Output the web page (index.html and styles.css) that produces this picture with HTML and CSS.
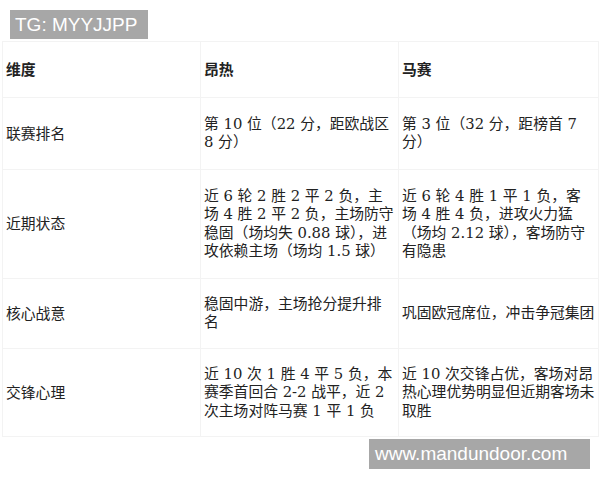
FILE: index.html
```html
<!DOCTYPE html>
<html lang="zh">
<head>
<meta charset="utf-8">
<link rel="stylesheet" href="styles.css">
</head>
<body>
<div class="page">
  <div class="top"><span class="badge">TG: MYYJJPP</span></div>
  <table class="cmp">
    <colgroup><col class="c1"><col class="c2"><col class="c3"></colgroup>
    <tr class="head">
      <th>维度</th><th>昂热</th><th>马赛</th>
    </tr>
    <tr>
      <td>联赛排名</td>
      <td>第 10 位（22 分，距欧战区 8 分）</td>
      <td>第 3 位（32 分，距榜首 7 分）</td>
    </tr>
    <tr>
      <td>近期状态</td>
      <td>近 6 轮 2 胜 2 平 2 负，主场 4 胜 2 平 2 负，主场防守稳固（场均失 0.88 球），进攻依赖主场（场均 1.5 球）</td>
      <td>近 6 轮 4 胜 1 平 1 负，客场 4 胜 4 负，进攻火力猛（场均 2.12 球），客场防守有隐患</td>
    </tr>
    <tr class="tight">
      <td>核心战意</td>
      <td>稳固中游，主场抢分提升排名</td>
      <td>巩固欧冠席位，冲击争冠集团</td>
    </tr>
    <tr class="tight">
      <td>交锋心理</td>
      <td>近 10 次 1 胜 4 平 5 负，本赛季首回合 2-2 战平，近 2 次主场对阵马赛 1 平 1 负</td>
      <td>近 10 次交锋占优，客场对昂热心理优势明显但近期客场未取胜</td>
    </tr>
  </table>
  <div class="bottom"><span class="badge wide">www.mandundoor.com</span></div>
</div>
</body>
</html>
```

FILE: styles.css
```css
html, body {
  margin: 0;
  padding: 0;
  background: #ffffff;
}
.page {
  width: 600px;
  height: 480px;
  padding-top: 10px;
  box-sizing: border-box;
  overflow: hidden;
}
.top {
  padding-left: 10px;
  height: 29px;
}
.badge {
  display: inline-block;
  height: 29px;
  line-height: 29px;
  background: #a7a7a7;
  color: #ffffff;
  font-family: "Liberation Sans", Arial, sans-serif;
  font-size: 19px;
  padding: 0 0 0 5px;
  box-sizing: border-box;
  width: 138px;
  white-space: nowrap;
  overflow: hidden;
}
.cmp {
  margin: 2px 0 0 2px;
  width: 596px;
  border-collapse: collapse;
  table-layout: fixed;
  font-family: "DejaVu Serif", "Noto Sans CJK SC", serif;
  font-size: 14.8px;
  line-height: 18.5px;
  color: #222222;
}
.c1 { width: 198px; }
.c2 { width: 198px; }
.c3 { width: 200px; }
.cmp th, .cmp td {
  border: 1px solid #f3f3f3;
  padding: 17px 2px 17px 3px;
  text-align: left;
  vertical-align: middle;
}
.cmp td:last-child,
.cmp th:last-child {
  padding-right: 3px;
}
.cmp .tight td {
  padding-top: 16px;
  padding-bottom: 16px;
}
.cmp th {
  font-family: "Noto Sans CJK SC", sans-serif;
  font-weight: bold;
  padding-top: 18px;
  padding-bottom: 18px;
}
.cmp td:first-child {
  font-family: "Noto Sans CJK SC", sans-serif;
}
.bottom {
  display: flex;
  justify-content: flex-end;
  padding-right: 10px;
  margin-top: 2px;
}
.badge.wide {
  width: 221px;
  height: 30px;
  line-height: 30px;
  padding: 0 0 0 6px;
}
```
